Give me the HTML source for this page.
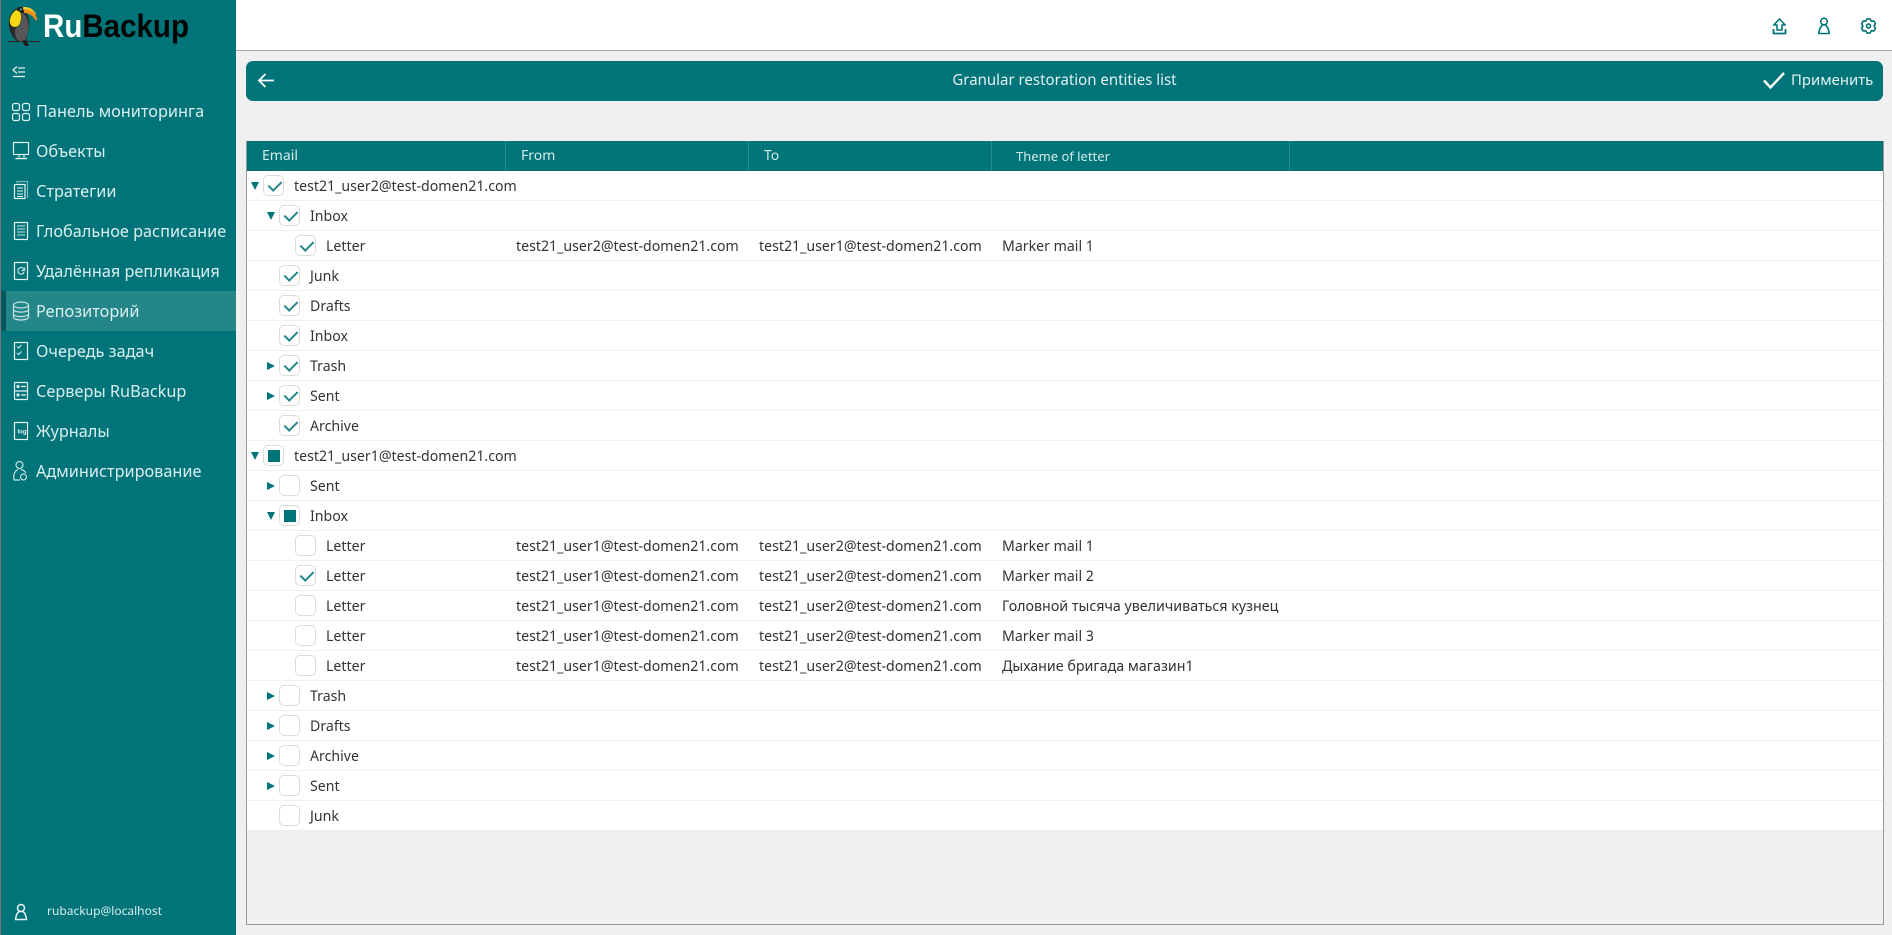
<!DOCTYPE html>
<html><head><meta charset="utf-8"><style>
*{box-sizing:border-box}
html,body{margin:0;padding:0;width:1892px;height:935px;overflow:hidden;background:#f0f0f0;font-family:"Noto Sans","Open Sans","DejaVu Sans","Liberation Sans",sans-serif;}
.a{position:absolute}
#top{left:0;top:0;width:1892px;height:51px;background:#fff;border-bottom:1px solid #aaa}
#side{left:0;top:0;width:236px;height:935px;background:#007478;border-left:1px solid #777}
.m{position:absolute;left:36px;height:40px;line-height:39px;font-size:16.3px;color:#d9eeee;white-space:nowrap}
#act{left:1px;top:291px;width:235px;height:40px;background:#248689;border-left:5px solid #04585c}
#bar{left:246px;top:61px;width:1637px;height:40px;background:#007478;border-radius:7px;color:#e3f2f2}
#tb{left:246px;top:141px;width:1638px;height:784px;border:1px solid #999;border-top:0}
#th{left:247px;top:141px;width:1636px;height:30px;background:#007478;color:#d5ecec;font-size:14px;line-height:30px}
#th span{position:absolute;top:0}
#th i{position:absolute;top:0;width:1px;height:30px;background:#2a8a8d}
.r{position:absolute;left:247px;width:1636px;height:30px;background:#fff;border-bottom:1px solid #f0f0f0;font-size:14.15px;line-height:29px;color:#333;white-space:nowrap}
.r span{position:absolute;top:1px}
.c{position:absolute;top:4px;width:21px;height:21px;border:1px solid #dcdcdc;border-radius:5px;background:#fff}
.c.k::after{content:"";position:absolute;left:7px;top:2px;width:6px;height:11px;border:solid #23878a;border-width:0 2px 2px 0;transform:rotate(45deg)}
.c.s::after{content:"";position:absolute;left:4px;top:4px;width:12px;height:12px;background:#007478}
.d,.g{position:absolute}
.d{top:11px;width:0;height:0;border-left:4px solid transparent;border-right:4px solid transparent;border-top:8px solid #007478}
.g{top:11px;width:0;height:0;border-top:4px solid transparent;border-bottom:4px solid transparent;border-left:8px solid #007478}
.l0 .c{left:16px}.l1 .c{left:32px}.l2 .c{left:48px}
.l0 .n{left:47px}.l1 .n{left:63px}.l2 .n{left:79px}
.l0 .d,.l0 .g{left:4px}.l1 .d,.l1 .g{left:20px}
.f{left:269px}.t{left:512px}.h{left:755px}
.ru{font-size:14.28px}
</style></head><body>
<div class="a" id="top"></div>
<svg class="a" style="left:1692px;top:0" width="200" height="50" fill="none" stroke="#007478" stroke-width="1.6" stroke-linejoin="round">
<path d="M81.500 29V33.500H93.500V29" stroke-width="1.800"/>
<path d="M87.500 19 81.800 25H85V30H90V25H93.200Z"/>
<circle cx="132" cy="21.500" r="3.300"/>
<path d="M126.800 33.500C127.200 29 128.500 26.800 130.300 25H133.700C135.500 26.800 136.800 29 137.200 33.500Z"/>
<path d="M175 18.900H178L179.300 21.150 181.900 21.100 183.400 23.700 182.100 26 183.400 28.300 181.900 30.900 179.300 30.850 178 33.100H175L173.700 30.850 171.100 30.900 169.600 28.300 170.900 26 169.600 23.700 171.100 21.100 173.700 21.150Z"/>
<circle cx="176.500" cy="26" r="2"/>
</svg>

<div class="a" id="side"></div>
<svg class="a" style="left:0;top:0" width="200" height="52">
<path d="M8 41.500H40" stroke="#2a2320" stroke-width="1"/>
<path d="M17 8C12 10 8 18 9 26 10 34 14 40 19 42L26 42 28 32C30 26 30 18 26 12Z" fill="#2b2b2b"/>
<path d="M21 12C26 14 29 20 28.500 28 28 34 26 40 24 42L19 41C15 38 14 32 16 28 20 26 22 20 21 12Z" fill="#565656"/>
<path d="M16 10C12 13 9 18 10 23 11 27 15 28 18 26 21 23 22 16 20 12Z" fill="#f8d90f"/>
<path d="M18 7.500C21 6.500 23 7 24 8L24 13C21 13 19 11 18 7.500Z" fill="#111"/>
<circle cx="21" cy="9.500" r="1.200" fill="#3aa0a8"/>
<path d="M23 7C29 6.500 35 10 37.500 20L36 20.500C33 16 29 13 24 13Z" fill="#f08f14"/>
<path d="M23 7C29 6.500 34 9 36.500 15 32 11 28 9 23 9.500Z" fill="#f5c92a"/>
<path d="M22 41 25 46H29L26 40Z" fill="#211a18"/>
<text x="43" y="37" font-family="'Liberation Sans',sans-serif" font-weight="700" font-size="32" textLength="146" lengthAdjust="spacingAndGlyphs"><tspan fill="#fff">Ru</tspan><tspan fill="#050505">Backup</tspan></text>
</svg>

<div class="a" id="act"></div>
<svg class="a" style="left:0;top:0" width="36" height="935" fill="none" stroke="#e6f3f3" stroke-width="1.200">
<path d="M17 66.500 13 70 17 73.500M18 68H25M18 72H25M13 76.500H25"/>
<rect x="12.500" y="103.500" width="7" height="7" rx="2"/><rect x="22.500" y="103.500" width="7" height="7" rx="2"/><rect x="12.500" y="113.500" width="7" height="7" rx="2"/><rect x="22.500" y="113.500" width="7" height="7" rx="2"/>
<rect x="13.500" y="142.500" width="15" height="12"/><path d="M19 155.500V157M24 155.500V157M15.500 158.500H27" stroke-width="1.500"/>
<path d="M17 183V181.500H27.500V198" stroke="#7fb8ba"/><rect x="14.500" y="184.500" width="10.500" height="14" /><path d="M17 188H23M17 191H23M17 194H23M17 196.500H23" stroke-width="1"/>
<rect x="14.500" y="222.500" width="13" height="17"/><path d="M17 226H25M17 229H25M17 232H25M17 235H25" stroke="#9fd0d1"/>
<rect x="14.500" y="262.500" width="13" height="17"/><path d="M24 270C23 266 18 267 18 271 18 275 23 275 24 272" stroke="#bfe0e0"/><path d="M24.500 267.500V270.500H21.500" stroke="#bfe0e0"/>
<g stroke="#c7e3e4"><ellipse cx="21" cy="305" rx="7.500" ry="3"/><path d="M13.500 305V317C13.500 321 28.500 321 28.500 317V305M13.500 309.500C13.500 313 28.500 313 28.500 309.500M13.500 314C13.500 317.500 28.500 317.500 28.500 314"/></g>
<rect x="14.500" y="342.500" width="13" height="17"/><path d="M17 346.500 18.500 348 21.500 345M17 353 18.500 354.500 21.500 351.500" stroke-width="1"/>
<rect x="14.500" y="382.500" width="13" height="17" rx="1"/><path d="M14.500 391H27.500M21 386.500H26M21 395H26" /><circle cx="18" cy="386.500" r="1"/><circle cx="18" cy="395" r="1"/>
<rect x="14.500" y="422.500" width="13" height="17"/>
<g stroke="#c7e3e4"><circle cx="19.500" cy="465" r="3.500"/><path d="M14 480C13 474 15 471 18 469.500M21 469.500C23.500 470 25 471.500 26 473M14 480H20"/><circle cx="23.500" cy="477" r="3"/></g>
<circle cx="21" cy="908" r="3.500" stroke-width="1.500"/>
<path d="M15.500 919.500C16 915 17 913 19 911.500H23C25 913 26 915 26.500 919.500Z" stroke-width="1.500"/>
</svg>
<svg class="a" style="left:15px;top:422px" width="14" height="18"><text x="2.500" y="11.500" font-size="6" font-weight="700" fill="#e6f3f3" font-family="'Liberation Sans',sans-serif">log</text></svg>

<div class="m" style="top:92px">Панель мониторинга</div>
<div class="m" style="top:132px">Объекты</div>
<div class="m" style="top:172px">Стратегии</div>
<div class="m" style="top:212px">Глобальное расписание</div>
<div class="m" style="top:252px">Удалённая репликация</div>
<div class="m" style="top:292px">Репозиторий</div>
<div class="m" style="top:332px">Очередь задач</div>
<div class="m" style="top:372px">Серверы RuBackup</div>
<div class="m" style="top:412px">Журналы</div>
<div class="m" style="top:452px">Администрирование</div>
<div class="m" style="left:47px;top:891px;font-size:12px">rubackup@localhost</div>

<div class="a" id="bar">
<svg class="a" style="left:10px;top:8px" width="22" height="24" fill="none" stroke="#fff" stroke-width="1.800"><path d="M3 11.500H18M9.500 5 3 11.500 9.500 18"/></svg>
<div class="a" style="left:0;width:1637px;text-align:center;top:0;line-height:38px;font-size:15px;">Granular restoration entities list</div>
<svg class="a" style="left:1516px;top:10px" width="24" height="20" fill="none" stroke="#fff" stroke-width="2.400"><path d="M2 9.500 8.500 16.500 22 2"/></svg>
<div class="a" style="left:1545px;top:0;line-height:38px;font-size:14.9px;white-space:nowrap">Применить</div>
</div>

<div class="a" id="tb"></div>
<div class="a" id="th"><span style="left:15px">Email</span><i style="left:258px"></i><span style="left:274px">From</span><i style="left:501px"></i><span style="left:517px">To</span><i style="left:744px"></i><span style="left:769px;font-size:13px">Theme of letter</span><i style="left:1042px"></i></div>

<div class="r l0" style="top:171px"><b class="d"></b><b class="c k"></b><span class="n">test21_user2@test-domen21.com</span></div>
<div class="r l1" style="top:201px"><b class="d"></b><b class="c k"></b><span class="n">Inbox</span></div>
<div class="r l2" style="top:231px"><b class="c k"></b><span class="n">Letter</span><span class="f">test21_user2@test-domen21.com</span><span class="t">test21_user1@test-domen21.com</span><span class="h">Marker mail 1</span></div>
<div class="r l1" style="top:261px"><b class="c k"></b><span class="n">Junk</span></div>
<div class="r l1" style="top:291px"><b class="c k"></b><span class="n">Drafts</span></div>
<div class="r l1" style="top:321px"><b class="c k"></b><span class="n">Inbox</span></div>
<div class="r l1" style="top:351px"><b class="g"></b><b class="c k"></b><span class="n">Trash</span></div>
<div class="r l1" style="top:381px"><b class="g"></b><b class="c k"></b><span class="n">Sent</span></div>
<div class="r l1" style="top:411px"><b class="c k"></b><span class="n">Archive</span></div>
<div class="r l0" style="top:441px"><b class="d"></b><b class="c s"></b><span class="n">test21_user1@test-domen21.com</span></div>
<div class="r l1" style="top:471px"><b class="g"></b><b class="c"></b><span class="n">Sent</span></div>
<div class="r l1" style="top:501px"><b class="d"></b><b class="c s"></b><span class="n">Inbox</span></div>
<div class="r l2" style="top:531px"><b class="c"></b><span class="n">Letter</span><span class="f">test21_user1@test-domen21.com</span><span class="t">test21_user2@test-domen21.com</span><span class="h">Marker mail 1</span></div>
<div class="r l2" style="top:561px"><b class="c k"></b><span class="n">Letter</span><span class="f">test21_user1@test-domen21.com</span><span class="t">test21_user2@test-domen21.com</span><span class="h">Marker mail 2</span></div>
<div class="r l2" style="top:591px"><b class="c"></b><span class="n">Letter</span><span class="f">test21_user1@test-domen21.com</span><span class="t">test21_user2@test-domen21.com</span><span class="h ru">Головной тысяча увеличиваться кузнец</span></div>
<div class="r l2" style="top:621px"><b class="c"></b><span class="n">Letter</span><span class="f">test21_user1@test-domen21.com</span><span class="t">test21_user2@test-domen21.com</span><span class="h">Marker mail 3</span></div>
<div class="r l2" style="top:651px"><b class="c"></b><span class="n">Letter</span><span class="f">test21_user1@test-domen21.com</span><span class="t">test21_user2@test-domen21.com</span><span class="h ru">Дыхание бригада магазин1</span></div>
<div class="r l1" style="top:681px"><b class="g"></b><b class="c"></b><span class="n">Trash</span></div>
<div class="r l1" style="top:711px"><b class="g"></b><b class="c"></b><span class="n">Drafts</span></div>
<div class="r l1" style="top:741px"><b class="g"></b><b class="c"></b><span class="n">Archive</span></div>
<div class="r l1" style="top:771px"><b class="g"></b><b class="c"></b><span class="n">Sent</span></div>
<div class="r l1" style="top:801px"><b class="c"></b><span class="n">Junk</span></div>
</body></html>
